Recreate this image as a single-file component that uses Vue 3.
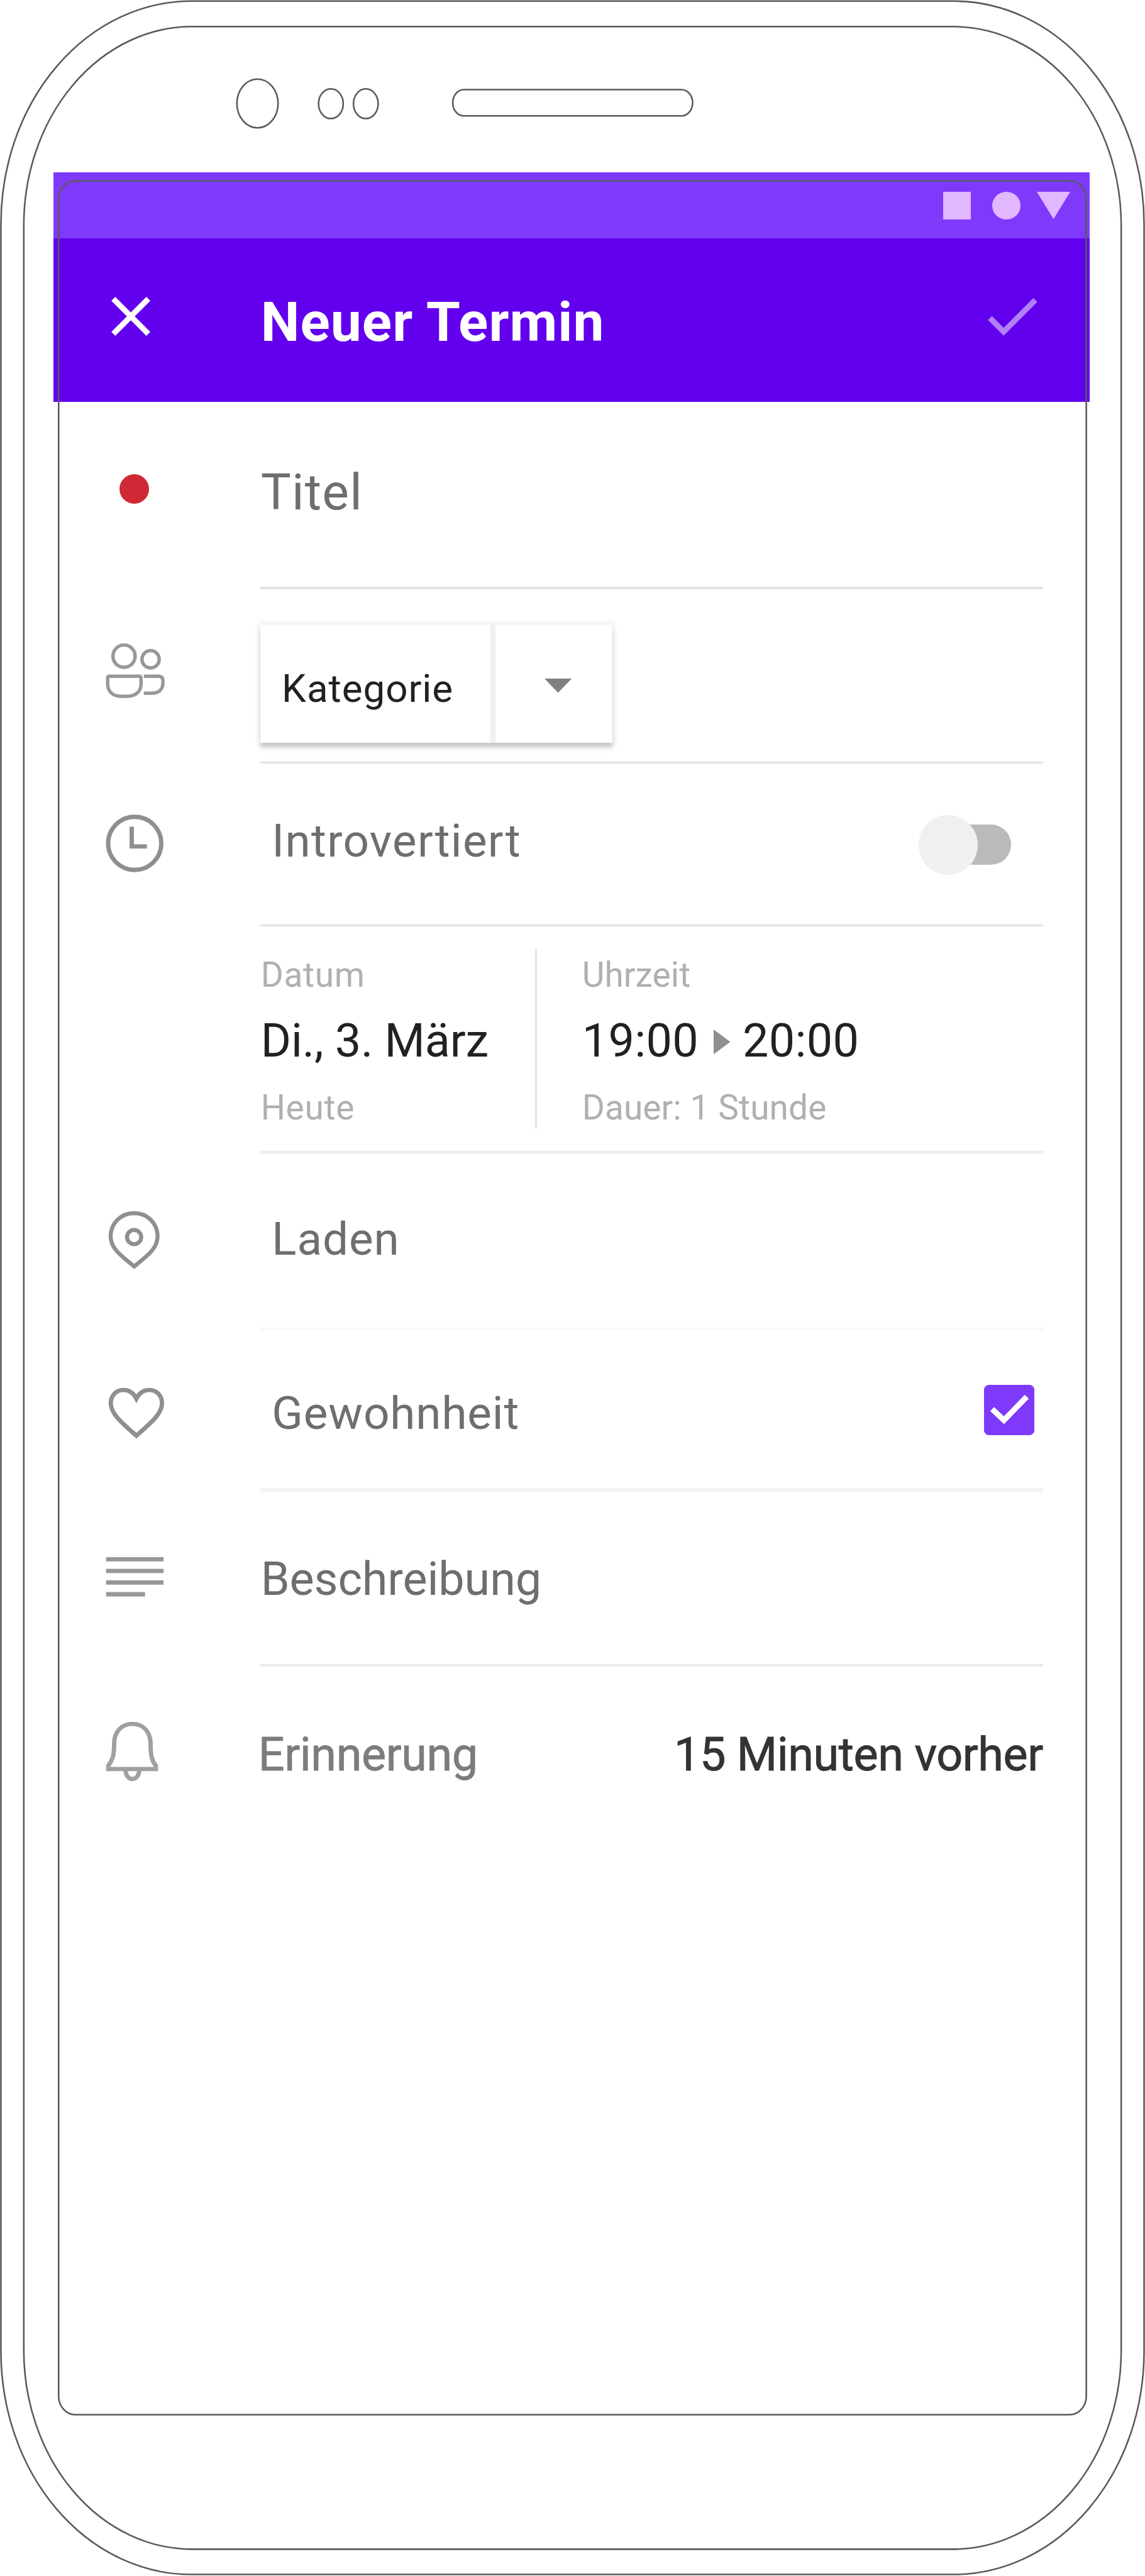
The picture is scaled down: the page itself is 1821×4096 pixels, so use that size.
<script setup>
import { ref } from 'vue'

const introverted = ref(false)
const habit = ref(true)
</script>

<template>
  <div class="page">
    <div class="phone">
      <main class="display">
        <div class="status-bar">
          <span class="status-square"></span>
          <span class="status-circle"></span>
          <svg class="status-triangle" viewBox="0 0 54 44"><path d="M0 0H54L27 44Z" /></svg>
        </div>

        <header class="app-bar">
          <svg class="close" viewBox="0 0 24 24">
            <path d="M19 6.41 17.59 5 12 10.59 6.41 5 5 6.41 10.59 12 5 17.59 6.41 19 12 13.41 17.59 19 19 17.59 13.41 12z" />
          </svg>
          <h1>Neuer Termin</h1>
          <svg class="confirm" viewBox="0 0 24 24">
            <path d="M9 16.17 4.83 12l-1.42 1.41L9 19 21 7l-1.41-1.41z" />
          </svg>
        </header>

        <section class="row row-title">
          <div class="lead"><span class="color-dot"></span></div>
          <div class="content"><span class="title-field">Titel</span></div>
        </section>

        <section class="row row-category">
          <div class="lead">
            <svg class="icon people" viewBox="0 0 120 120">
              <circle cx="43" cy="37" r="18" />
              <circle cx="86" cy="42" r="14" />
              <path d="M19 69.500H67.500Q70.500 69.500 70.500 72.500V82C70.500 95 61 102 47 102H39.500C25.500 102 16.500 95 16.500 82V72.500Q16.500 69.500 19 69.500Z" />
              <path d="M75 69.500H99Q106 69.500 106 76.500V80C106 91 99 97 88 97H75" />
            </svg>
          </div>
          <div class="content">
            <div class="select">
              <span class="select-label">Kategorie</span>
              <span class="select-arrow">
                <svg viewBox="0 0 44 23"><path d="M0 0H44L22 23Z" /></svg>
              </span>
            </div>
          </div>
        </section>

        <section class="row row-introverted">
          <div class="lead">
            <svg class="icon" viewBox="0 0 120 120">
              <circle cx="60.3" cy="60" r="43" />
              <path d="M55.500 33V65H80" />
            </svg>
          </div>
          <div class="content">
            <span class="label tracked introverted-label">Introvertiert</span>
            <span class="toggle" :class="{ on: introverted }"><i></i></span>
          </div>
        </section>

        <section class="row row-schedule">
          <div class="lead"></div>
          <div class="content">
            <div class="slot date">
              <small>Datum</small>
              <strong>Di., 3. März</strong>
              <small>Heute</small>
            </div>
            <div class="slot time">
              <small>Uhrzeit</small>
              <strong>
                <span>19:00</span>
                <svg viewBox="0 0 27 40"><path d="M0 0L27 20L0 40Z" /></svg>
                <span>20:00</span>
              </strong>
              <small>Dauer: 1 Stunde</small>
            </div>
          </div>
        </section>

        <section class="row row-place">
          <div class="lead">
            <svg class="icon" viewBox="0 0 120 120">
              <path class="thin" d="M59.500 17.300C37.500 17.300 21.300 34 21.300 55C21.300 75 40 87.500 59.500 103.500C79 87.500 97.300 75 97.300 55C97.300 34 81 17.300 59.500 17.300Z" />
              <circle class="thin" cx="59.300" cy="56" r="11.500" />
            </svg>
          </div>
          <div class="content"><span class="label tracked">Laden</span></div>
        </section>

        <section class="row row-habit">
          <div class="lead">
            <svg class="icon" viewBox="0 0 120 120">
              <path d="M63 93.500C40 73 21.500 58 21.500 41C21.500 28.500 30.500 19.500 42 19.500C51 19.500 58.500 24.500 63 33.500C67.500 24.500 75 19.500 84 19.500C95.500 19.500 104.500 28.500 104.500 41C104.500 58 86 73 63 93.500Z" />
            </svg>
          </div>
          <div class="content">
            <span class="label tracked">Gewohnheit</span>
            <span class="checkbox">
              <svg v-if="habit" viewBox="0 0 64 49"><path d="M4 25L23 43L60 5" /></svg>
            </span>
          </div>
        </section>

        <section class="row row-description">
          <div class="lead">
            <svg class="icon solid" viewBox="0 0 120 120">
              <path d="M14 29.500h93v7h-93zM14 48.300h93v7h-93zM14 67h93v7h-93zM14 86h63v7h-63z" />
            </svg>
          </div>
          <div class="content"><span class="label">Beschreibung</span></div>
        </section>

        <section class="row row-reminder">
          <div class="lead">
            <svg class="icon bell" viewBox="0 0 120 120">
              <path d="M17.500 92.500V87C24 79 27 71 27 52C27 32 39 19.500 56.500 19.500C74 19.500 86 32 86 52C86 71 88 79 94.500 87V92.500Z" />
              <path d="M45.500 95C45.500 102 50 108.500 56.500 108.500C63 108.500 67.500 102 67.500 95" />
            </svg>
          </div>
          <div class="content">
            <span class="label reminder-label">Erinnerung</span>
            <span class="label reminder-value">15 Minuten vorher</span>
          </div>
        </section>
      </main>

      <svg class="bezel" viewBox="0 0 1853 4168">
        <rect x="1.500" y="1.800" width="1850" height="4163.700" rx="308" ry="361" />
        <rect x="38.500" y="43" width="1776" height="4081.600" rx="272" ry="322" />
        <rect x="94.900" y="292.600" width="1663.100" height="3614.400" rx="27" ry="30" />
        <ellipse cx="416.700" cy="167.400" rx="33.300" ry="39.400" />
        <ellipse cx="535.500" cy="167.800" rx="20" ry="24" />
        <ellipse cx="592" cy="167.800" rx="20" ry="24" />
        <rect x="732.700" y="145" width="388.200" height="42.500" rx="18" ry="21.250" />
      </svg>
    </div>
  </div>
</template>

<style>
html,
body {
  margin: 0;
  background: #fff;
}
</style>

<style scoped>
.page {
  width: 1821px;
  height: 4096px;
  overflow: hidden;
  background: #fff;
}

/* The mock-up is laid out on a 1853 x 4168 artboard. */
.phone {
  position: relative;
  box-sizing: border-box;
  width: 1853px;
  height: 4168px;
  padding: 279px 90px 0 87px;
  zoom: 0.98273;
  font-family: Roboto, 'Liberation Sans', sans-serif;
  color: #212121;
}

.bezel {
  position: absolute;
  inset: 0;
  width: 1853px;
  height: 4168px;
  fill: none;
  stroke: #5a5a5a;
  stroke-width: 2.6;
  pointer-events: none;
}

.status-bar {
  display: flex;
  align-items: flex-start;
  justify-content: flex-end;
  box-sizing: border-box;
  height: 107px;
  padding: 31px 31px 0 0;
  background: #7f39fb;
}

.status-square,
.status-circle {
  width: 45px;
  height: 45px;
  background: #e1b7ff;
}

.status-circle {
  margin-left: 35px;
  border-radius: 50%;
}

.status-triangle {
  width: 54px;
  height: 44px;
  margin-left: 27px;
  fill: #e1b7ff;
}

.app-bar {
  display: flex;
  align-items: flex-start;
  height: 264px;
  background: #6200ee;
  fill: #fff;
}

.close {
  width: 108px;
  height: 108px;
  margin: 72px 156px 0 71px;
}

h1 {
  flex: 1;
  margin: 85px 0 0;
  font-size: 89px;
  font-weight: 700;
  line-height: 100px;
  letter-spacing: 1.1px;
  color: #fff;
}

.confirm {
  width: 109px;
  height: 109px;
  margin: 71px 71px 0 0;
  opacity: 0.5;
}

.row {
  display: grid;
  grid-template-columns: 334px 1267px;
}

.content {
  display: flex;
  align-items: flex-start;
  justify-content: space-between;
  box-sizing: border-box;
  border-bottom: 5px solid #e2e2e2;
}

.icon {
  display: block;
  width: 120px;
  height: 120px;
  margin-left: 71px;
  fill: none;
  stroke: #8f8f8f;
  stroke-width: 7;
}

.icon.solid {
  fill: #979797;
  stroke: none;
}

.thin {
  stroke-width: 6.5;
}

.people {
  stroke: #989898;
  stroke-width: 5.5;
}

.bell {
  stroke: #a0a0a0;
  stroke-width: 7;
}

.label {
  margin-left: 1px;
  font-size: 75px;
  line-height: 100px;
  letter-spacing: -0.1px;
  color: #6e6e6e;
}

.tracked {
  margin-left: 19px;
  font-size: 74px;
  letter-spacing: 0.95px;
}

.introverted-label {
  letter-spacing: 1.4px;
}

.row-title {
  height: 304px;
}

.color-dot {
  display: block;
  width: 48px;
  height: 48px;
  margin: 117px 0 0 106px;
  border-radius: 50%;
  background: #cf2935;
}

.title-field {
  margin: 97px 0 0 1px;
  font-size: 82px;
  line-height: 100px;
  letter-spacing: 1.2px;
  color: #6e6e6e;
}

.row-category {
  height: 281px;
}

.row-category .content,
.row-introverted .content {
  border-bottom-width: 4px;
}

.row-category .icon {
  margin-top: 71px;
}

.select {
  display: flex;
  width: 570px;
  height: 191px;
  margin-top: 57px;
  background: #fff;
  box-shadow: 0 8px 3px rgba(0, 0, 0, 0.08), 0 10px 9px rgba(0, 0, 0, 0.1), 0 0 8px 3px rgba(0, 0, 0, 0.07);
}

.select-label {
  box-sizing: border-box;
  width: 381px;
  padding: 53px 0 0 35px;
  border-right: 9px solid #f1f1f1;
  font-size: 63px;
  line-height: 100px;
  letter-spacing: 0.96px;
}

.select-arrow {
  padding: 87px 0 0 79px;
}

.select-arrow svg {
  display: block;
  width: 44px;
  height: 23px;
  fill: #808080;
}

.row-introverted {
  height: 264px;
}

.row-introverted .icon {
  margin-top: 70px;
}

.row-introverted .label {
  margin-top: 77px;
}

.toggle {
  display: flex;
  align-items: center;
  width: 149px;
  height: 98px;
  margin: 83px 52px 0 0;
}

.toggle::after {
  content: '';
  flex: 1;
  height: 65px;
  margin-left: -70px;
  border-radius: 0 33px 33px 0;
  background: #bababa;
}

.toggle i {
  position: relative;
  width: 95px;
  height: 97px;
  border-radius: 50%;
  background: #f0f0f0;
}

.row-schedule {
  height: 368px;
}

.row-schedule .content {
  justify-content: flex-start;
  border-bottom: 6px solid #ededed;
}

.slot {
  display: flex;
  flex-direction: column;
  box-sizing: border-box;
  height: 291px;
  margin-top: 37px;
  padding-top: 7px;
}

.date {
  width: 448px;
  padding-left: 1px;
  border-right: 4px solid #e3e3e3;
}

.time {
  padding-left: 73px;
}

small {
  font-size: 56px;
  line-height: 70px;
  letter-spacing: 0.1px;
  color: #b0b0b0;
  white-space: nowrap;
}

.date small {
  letter-spacing: 0.7px;
}

strong {
  display: flex;
  margin: 31px 0 33px;
  font-size: 75px;
  font-weight: 400;
  line-height: 80px;
  letter-spacing: -0.1px;
  white-space: nowrap;
}

.time strong {
  letter-spacing: 0.4px;
}

strong svg {
  width: 27px;
  height: 40px;
  margin: 22px 20px 0 24px;
  fill: #8f8f8f;
}

.row-place {
  height: 285px;
}

.row-place .content {
  border-bottom-color: #f8f8f8;
}

.row-place .icon {
  margin-top: 79px;
}

.row-place .label {
  margin-top: 89px;
}

.row-habit {
  height: 263px;
}

.row-habit .content {
  border-bottom: 8px solid #f4f4f4;
}

.row-habit .icon {
  margin-top: 78px;
}

.row-habit .label {
  margin-top: 86px;
}

.checkbox {
  box-sizing: border-box;
  width: 81px;
  height: 81px;
  margin: 89px 14px 0 0;
  padding: 14px 0 0 9px;
  border-radius: 8px;
  background: #7f39fb;
}

.checkbox svg {
  display: block;
  width: 64px;
  height: 49px;
  fill: none;
  stroke: #fff;
  stroke-width: 9;
}

.row-description {
  height: 282px;
}

.row-description .content {
  border-bottom-color: #eaeaea;
}

.row-description .icon {
  margin-top: 75px;
}

.row-description .label {
  margin-top: 90px;
}

.row-reminder .content {
  border-bottom: 0;
}

.row-reminder .icon {
  margin-top: 73px;
}

.reminder-label {
  margin: 92px 0 0 -3px;
  letter-spacing: -0.4px;
  color: #7c7c7c;
  -webkit-text-stroke: 0.8px #7c7c7c;
}

.reminder-value {
  margin-top: 92px;
  letter-spacing: -0.4px;
  color: #333;
  -webkit-text-stroke: 1px #333;
}
</style>
